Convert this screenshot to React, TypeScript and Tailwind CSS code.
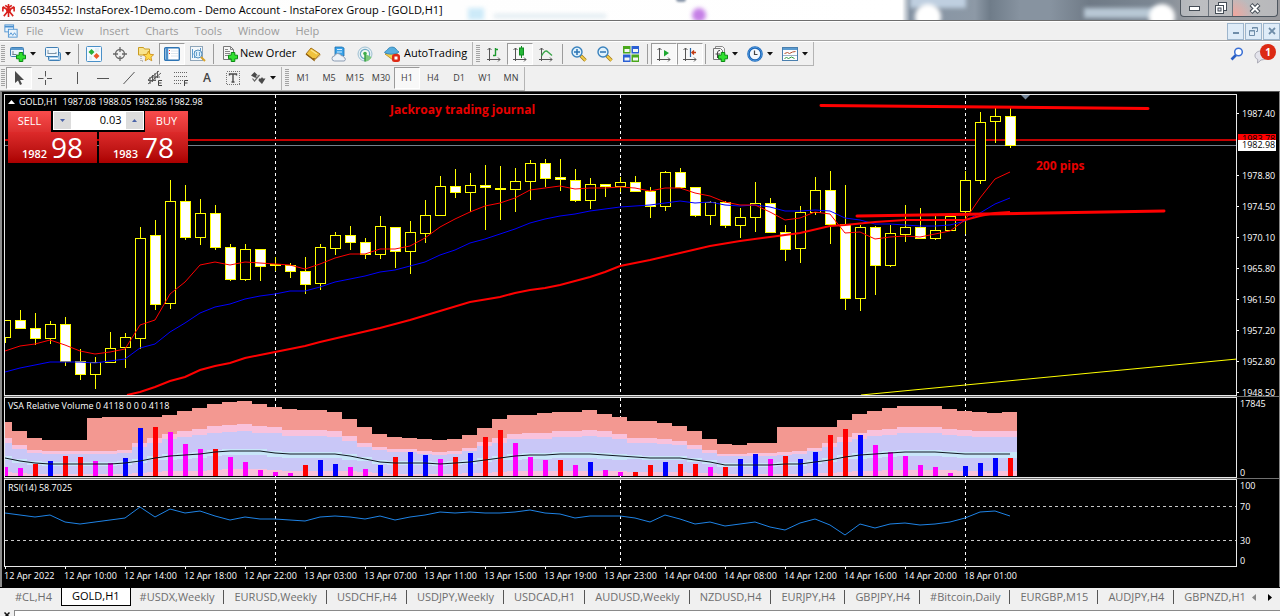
import { useState } from 'react';
import type { ReactNode } from 'react';
import clsx from 'clsx';

// [high, bodyTop, bodyBottom, low, bearish]
type Candle = [number, number, number, number, 0 | 1];

const STEP = 15;
const FIRST_X = 5;
const barX = (i: number) => FIRST_X + i * STEP;

const CANDLES: Candle[] = [
  [320, 320, 337, 342, 0], [310, 320, 328, 328, 1], [313, 328, 338, 344, 1], [321, 324, 338, 343, 0],
  [317, 324, 361, 365, 1], [349, 361, 374, 379, 1], [357, 362, 374, 388, 0], [332, 348, 362, 362, 0],
  [333, 337, 347, 367, 0], [227, 238, 338, 348, 0], [220, 235, 304, 309, 1], [180, 201, 303, 308, 0],
  [185, 201, 237, 239, 1], [199, 213, 237, 244, 0], [205, 213, 247, 249, 1], [244, 247, 279, 280, 1],
  [244, 249, 279, 280, 0], [249, 249, 266, 280, 1], [257, 264, 265, 270, 0], [263, 265, 271, 277, 1],
  [257, 271, 284, 293, 1], [244, 247, 283, 289, 0], [232, 235, 248, 254, 0], [226, 235, 242, 249, 1],
  [238, 242, 254, 258, 1], [216, 226, 254, 258, 0], [227, 227, 251, 267, 1], [221, 232, 251, 273, 0],
  [200, 215, 233, 242, 0], [176, 186, 215, 215, 0], [169, 186, 192, 197, 1], [173, 185, 192, 211, 0],
  [165, 185, 187, 229, 1], [166, 188, 189, 219, 1], [168, 181, 189, 211, 0], [160, 163, 181, 199, 0],
  [159, 163, 178, 186, 1], [159, 177, 179, 190, 1], [169, 180, 200, 201, 1], [178, 184, 200, 208, 0],
  [184, 184, 186, 196, 1], [177, 182, 186, 191, 0], [176, 182, 191, 191, 1], [187, 191, 206, 217, 1],
  [171, 172, 206, 210, 0], [168, 172, 187, 187, 1], [187, 187, 215, 216, 1], [201, 202, 215, 224, 0],
  [201, 202, 225, 227, 1], [208, 217, 225, 237, 0], [182, 203, 217, 231, 0], [198, 203, 232, 232, 1],
  [225, 232, 249, 260, 1], [206, 212, 248, 262, 0], [177, 190, 212, 214, 0], [171, 190, 224, 243, 1],
  [185, 224, 298, 309, 1], [225, 227, 298, 310, 0], [226, 227, 265, 294, 1], [225, 233, 265, 266, 0],
  [205, 227, 234, 241, 0], [208, 227, 238, 238, 1], [215, 230, 238, 239, 0], [215, 216, 230, 230, 0],
  [171, 180, 211, 233, 0], [112, 122, 180, 183, 0], [108, 116, 121, 142, 0], [108, 116, 145, 147, 1],
];

const FAST_MA = [
  351, 346, 344, 340, 345, 351, 354, 352, 349, 325, 320, 294, 282, 265, 262, 265, 262, 263, 264, 265, 269, 264, 258,
  254, 254, 249, 249, 246, 238, 227, 219, 212, 206, 203, 198, 190, 188, 186, 189, 188, 188, 187, 188, 191, 188, 188,
  193, 196, 202, 205, 205, 212, 220, 218, 212, 214, 233, 232, 239, 237, 236, 237, 234, 231, 220, 198, 179, 172,
];

const MID_MA = [
  372, 368, 365, 362, 362, 362, 363, 361, 359, 348, 344, 332, 323, 313, 307, 304, 299, 296, 294, 291, 291, 287, 282,
  279, 276, 272, 270, 266, 262, 255, 250, 243, 239, 234, 229, 223, 219, 216, 214, 211, 209, 207, 206, 205, 203, 201,
  203, 202, 205, 206, 205, 207, 211, 211, 210, 211, 218, 220, 224, 224, 225, 226, 226, 225, 221, 213, 204, 198,
];

const SLOW_MA: [number, number][] = [
  [127, 395], [140, 392], [155, 387], [170, 381], [185, 377], [200, 370], [215, 366], [230, 363], [245, 358],
  [260, 355], [275, 352], [290, 349], [305, 346], [320, 342], [350, 335], [380, 328], [410, 320], [440, 311],
  [470, 302], [500, 297], [515, 293], [530, 290], [545, 288], [560, 285], [590, 277], [605, 272], [620, 266],
  [650, 260], [680, 253], [710, 246], [740, 241], [770, 237], [800, 233], [830, 226], [845, 225], [875, 222],
  [905, 220], [965, 220], [980, 216], [995, 213], [1010, 212],
];

const VSA_TOP = [
  422, 431, 438, 440, 440, 440, 418, 417, 417, 417, 417, 415, 411, 408, 404, 402, 401, 404, 407, 409, 410, 410, 412,
  419, 427, 434, 437, 438, 439, 440, 439, 435, 428, 419, 415, 415, 413, 412, 412, 410, 414, 417, 421, 421, 423, 426,
  431, 439, 444, 445, 443, 443, 427, 427, 427, 427, 420, 414, 411, 408, 406, 406, 406, 409, 411, 412, 413, 412,
];

const VSA_PINK = [
  438, 445, 450, 451, 451, 451, 451, 451, 450, 443, 438, 434, 431, 429, 426, 425, 424, 426, 427, 430, 430, 430, 431,
  436, 443, 447, 449, 449, 451, 452, 451, 448, 442, 438, 434, 433, 433, 431, 431, 430, 431, 434, 438, 438, 439, 441,
  445, 450, 454, 454, 453, 453, 452, 451, 448, 443, 437, 433, 430, 429, 427, 427, 427, 429, 430, 431, 431, 431,
];

const VSA_AVG = [
  458, 461, 463, 464, 464, 464, 464, 464, 463, 461, 458, 456, 455, 454, 452, 451, 451, 451, 453, 454, 454, 454, 454,
  456, 459, 462, 463, 463, 463, 464, 463, 462, 460, 458, 456, 455, 455, 454, 454, 454, 455, 456, 457, 458, 458, 458,
  460, 462, 465, 465, 465, 465, 464, 464, 462, 460, 457, 455, 454, 453, 452, 452, 452, 453, 454, 454, 454, 454,
];

const VSA_BARS = [
  467, 468, 464, 461, 456, 457, 461, 463, 458, 428, 427, 432, 444, 449, 449, 457, 462, 470, 472, 473, 465, 460, 464,
  467, 469, 465, 457, 452, 455, 459, 457, 453, 437, 430, 443, 457, 460, 460, 465, 462, 470, 472, 472, 465, 462, 464,
  464, 467, 467, 459, 454, 459, 456, 459, 452, 435, 429, 435, 445, 452, 456, 465, 467, 473, 466, 463, 458, 458,
];
const VSA_KINDS = 'MMRBRRMMBBRMMMRMMMMMRBBMMBRBBMRBRRMMMRMBMMRRBRRMRBBMRBBRRBMMMMMMBBBR';
const BAR_COLORS: Record<string, string> = { M: '#ff00ff', R: '#ff0000', B: '#0000ff' };

const RSI = [
  513, 515, 517, 515, 522, 524, 522, 520, 518, 507, 517, 509, 513, 511, 516, 520, 517, 519, 519, 520, 521, 517, 516,
  517, 519, 516, 520, 517, 515, 512, 513, 512, 513, 513, 512, 510, 513, 514, 518, 516, 516, 516, 518, 522, 515, 519,
  524, 522, 526, 524, 522, 527, 530, 523, 519, 525, 535, 524, 528, 524, 523, 525, 524, 522, 518, 512, 511, 516,
];

const DATES = [
  '12 Apr 2022', '12 Apr 10:00', '12 Apr 14:00', '12 Apr 18:00', '12 Apr 22:00', '13 Apr 03:00', '13 Apr 07:00',
  '13 Apr 11:00', '13 Apr 15:00', '13 Apr 19:00', '13 Apr 23:00', '14 Apr 04:00', '14 Apr 08:00', '14 Apr 12:00',
  '14 Apr 16:00', '14 Apr 20:00', '18 Apr 01:00',
];
const PRICES = ['1978.80', '1974.50', '1970.10', '1965.80', '1961.50', '1957.20', '1952.80', '1948.50'];
const SYMBOLS = [
  '#CL,H4', 'GOLD,H1', '#USDX,Weekly', 'EURUSD,Weekly', 'USDCHF,H4', 'USDJPY,Weekly', 'USDCAD,H1', 'AUDUSD,Weekly',
  'NZDUSD,H4', 'EURJPY,H4', 'GBPJPY,H4', '#Bitcoin,Daily', 'EURGBP,M15', 'AUDJPY,H4', 'GBPNZD,H1',
];
const MENUS = ['File', 'View', 'Insert', 'Charts', 'Tools', 'Window', 'Help'];
const PERIODS = ['M1', 'M5', 'M15', 'M30', 'H1', 'H4', 'D1', 'W1', 'MN'];

const series = (ys: number[]) => ys.map((y, i) => `${barX(i)},${y}`).join(' ');

/* ---------- icons ---------- */

function Svg({ children, size = 16 }: { children: ReactNode; size?: number }) {
  return (
    <svg width={size} height={size} viewBox="0 0 16 16" fill="none" className="shrink-0">
      {children}
    </svg>
  );
}

const GreenPlus = ({ x = 6, y = 6 }: { x?: number; y?: number }) => (
  <path
    transform={`translate(${x} ${y})`}
    d="M3.200.5h3.600v2.700h2.700v3.600h-2.700v2.700h-3.600v-2.700h-2.700v-3.600h2.700z"
    fill="#2fe02f"
    stroke="#0a8a12"
  />
);

const NewChartIcon = () => (
  <Svg>
    <rect x=".5" y="1.5" width="13" height="9" rx="1" fill="#eaf4fc" stroke="#3f7fb5" />
    <path d="M1 3h12" stroke="#5b9bd0" strokeWidth="2" />
    <path d="M3 5v4M2.500 8.500h4" stroke="#6d7f90" />
    <GreenPlus />
  </Svg>
);

const ProfilesIcon = () => (
  <Svg>
    <rect x="3.500" y="6.500" width="12" height="8" rx="1" fill="#a9cdea" stroke="#3f7fb5" />
    <path d="M5 12.500h8" stroke="#fff" />
    <rect x=".5" y="1.500" width="13" height="9" rx="1" fill="#eef6fc" stroke="#3f7fb5" />
    <path d="M3 4v4M3 7.500h8M11 6v2M5.500 7v1" stroke="#7d93a6" />
  </Svg>
);

const MarketWatchIcon = () => (
  <Svg>
    <rect x=".5" y=".5" width="15" height="15" rx="1" fill="#f4faff" stroke="#4a90c8" />
    <path d="M9 3h4M9 5h4M3 11h3M3 13h3" stroke="#d5e3ee" />
    <path d="M5.500 3l3 3-3 3-3-3z" fill="#27b03a" />
    <path d="M10.500 7l3 3-3 3-3-3z" fill="#ec5a2b" />
  </Svg>
);

const TargetIcon = () => (
  <Svg>
    <circle cx="8" cy="8" r="4.500" stroke="#6a6a6a" strokeWidth="1.300" />
    <path d="M8 1v5M8 10v5M1 8h5M10 8h5" stroke="#6a6a6a" strokeWidth="1.300" />
  </Svg>
);

const FolderStarIcon = () => (
  <Svg>
    <path d="M.5 1.500h5l1 1.500h5v6H.5z" fill="#f9e48e" stroke="#c99c22" />
    <path d="M3 10v5h3" stroke="#888" strokeDasharray="1 1" />
    <path d="M10.500 5l1.600 3.300 3.600.4-2.700 2.400.8 3.700-3.300-1.900-3.300 1.900.8-3.700-2.700-2.400 3.600-.4z" fill="#ffd84a" stroke="#c98a14" strokeWidth=".8" />
  </Svg>
);

const NavigatorIcon = () => (
  <Svg>
    <rect x=".7" y="1.700" width="14.600" height="12.600" rx="1" fill="#fff" stroke="#2d74b4" strokeWidth="1.400" />
    <path d="M3 2v12" stroke="#4d8fcb" strokeWidth="2.500" />
    <path d="M5.500 4v1M5.500 7v1" stroke="#e33" />
    <path d="M7 5h7M7 7.500h7M7 10h7" stroke="#dbe6ee" />
  </Svg>
);

const TesterIcon = () => (
  <Svg>
    <rect x=".5" y=".5" width="12" height="14" fill="#f3f7fa" stroke="#8fa5b8" />
    <path d="M2.500 3v9M4.500 5v7M10.500 2v5" stroke="#5b9bd0" />
    <circle cx="8" cy="8" r="4" fill="#d5ecfa" fillOpacity=".85" stroke="#5691c0" />
    <path d="M6.500 6v4M9.500 6v4" stroke="#6fa5cf" />
    <path d="M11 11l4 4" stroke="#d8a32b" strokeWidth="2" />
  </Svg>
);

const NewOrderIcon = () => (
  <Svg>
    <path d="M1.500.5h7l3 3v10h-10z" fill="#f6f6f6" stroke="#777" />
    <path d="M8.500.5v3h3M3 3.500h3M3 5.500h5M3 7.500h5M3 9.500h3" stroke="#888" />
    <GreenPlus />
  </Svg>
);

const BookIcon = () => (
  <Svg>
    <path d="M6 2l9 6-6 6-8-6z" fill="#f0c23c" stroke="#a8741a" />
    <path d="M1 8l8 6v-2" stroke="#8f5f12" strokeWidth="1.500" />
    <path d="M9 14l6-6v1.500l-6 5z" fill="#fff6d0" stroke="#a8741a" strokeWidth=".6" />
    <path d="M6 4l6 4" stroke="#fbe48a" strokeWidth="1.500" />
  </Svg>
);

const CloudServerIcon = () => (
  <Svg>
    <path d="M4 1h7l2 1v8H4z" fill="#3aa2e8" stroke="#1b6fb0" strokeWidth=".8" />
    <path d="M6 3.500h5M6 6h5" stroke="#d9f0ff" strokeWidth="1.200" />
    <path d="M3.500 15a2.500 2.500 0 010-5 3.500 3.500 0 016.500-.5 3 3 0 013 2 1.800 1.800 0 010 3.500z" fill="#eef2f7" stroke="#8c9db3" />
  </Svg>
);

const SignalIcon = () => (
  <Svg>
    <circle cx="8" cy="8" r="7" fill="#e6f0f4" stroke="#9fc0d2" />
    <circle cx="8" cy="8" r="4.600" fill="#f3faf3" stroke="#6da9c4" strokeWidth="1.200" />
    <path d="M8 8v7.500c3 0 5.500-2 6.500-4.500C13 10 10 9 8 8z" fill="#7cc97c" />
    <path d="M8 8v7.500" stroke="#2f9a3d" strokeWidth="1.400" />
    <circle cx="8" cy="7.500" r="1.800" fill="#3fae4c" />
  </Svg>
);

const AutoTradingIcon = () => (
  <Svg>
    <path d="M1 8l6-2 7 2-5 6z" fill="#f5cf4a" stroke="#b98618" strokeWidth=".8" />
    <path d="M.5 6.500C2 4 3 5 4 3s6-3 8 0c1 2 2 1.500 3 3-3 2.500-11 3-14.500.5z" fill="#57aede" stroke="#2c7cae" strokeWidth=".8" />
    <rect x="8" y="8" width="8" height="8" rx="2.500" fill="#dd2a16" />
    <rect x="10.500" y="10.500" width="3" height="3" fill="#fff" />
  </Svg>
);

const Axes = () => (
  <path d="M3.500 2v13M1 13.500h13M1.500 4L3.500 2l2 2M12 11.500l2 2-2 2" stroke="#555" />
);

const BarChartIcon = () => (
  <Svg>
    <Axes />
    <path d="M9.500 2v8M9.500 3.500H12M7 9.500h2.500" stroke="#1c9a2e" strokeWidth="1.400" />
  </Svg>
);

const CandleIcon = () => (
  <Svg>
    <Axes />
    <path d="M9.500 0v12" stroke="#128a22" />
    <rect x="7.500" y="2" width="4" height="7" fill="#25b838" stroke="#128a22" />
  </Svg>
);

const LineChartIcon = () => (
  <Svg>
    <Axes />
    <path d="M3.500 10C6 5 8 4 10 6l4 3.500" stroke="#3aa54a" strokeWidth="1.300" />
  </Svg>
);

const ZoomIcon = ({ plus = false }: { plus?: boolean }) => (
  <Svg>
    <path d="M9.500 9.500l5 5" stroke="#a67a14" strokeWidth="3.400" />
    <path d="M10 10l4.500 4.500" stroke="#f1cd4b" strokeWidth="1.800" />
    <circle cx="6" cy="6" r="5" fill="#dff1fc" stroke="#3a82bd" strokeWidth="1.400" />
    <path d={plus ? 'M3 6h6M6 3v6' : 'M3 6h6'} stroke="#2d74b4" strokeWidth="1.500" />
  </Svg>
);

const TilesIcon = () => (
  <Svg>
    <rect x="0" y="0" width="7.500" height="7.500" fill="#4aa81c" />
    <rect x="8.500" y="0" width="7.500" height="7.500" fill="#2a5fd4" />
    <rect x="0" y="8.500" width="7.500" height="7.500" fill="#2a5fd4" />
    <rect x="8.500" y="8.500" width="7.500" height="7.500" fill="#4aa81c" />
    <path d="M1.500 4.500h5M10 4.500h5M1.500 13h5M10 13h5" stroke="#f4f8f4" strokeWidth="3" />
  </Svg>
);

const AutoScrollIcon = () => (
  <Svg>
    <Axes />
    <path d="M8 4l5 3-5 3.500z" fill="#1ea832" />
  </Svg>
);

const ShiftIcon = () => (
  <Svg>
    <Axes />
    <path d="M8.500 2v9" stroke="#2866a8" strokeWidth="1.200" />
    <path d="M14 6.500h-4M12 4.500l-2 2 2 2" stroke="#c03a12" strokeWidth="1.400" />
  </Svg>
);

const IndicatorsIcon = () => (
  <Svg>
    <path d="M3.500.5h7l2 2v9h-9z" fill="#f6f6f6" stroke="#888" />
    <path d="M1.500 2.500h7l2 2v9h-9z" fill="#f6f6f6" stroke="#777" />
    <path d="M8 4.500c-2 0-2.500 1-2.500 2.500v5M3.500 8H8" stroke="#444" />
    <GreenPlus />
  </Svg>
);

const ClockIcon = () => (
  <Svg>
    <circle cx="8" cy="8" r="6.500" fill="#f2f8fd" stroke="#1d66b8" strokeWidth="2.600" />
    <circle cx="8" cy="8" r="6.800" stroke="#5aa6e8" strokeWidth=".7" />
    <path d="M7.500 4.500V8.500h3" stroke="#444" strokeWidth="1.200" />
  </Svg>
);

const TemplateIcon = () => (
  <Svg>
    <rect x=".5" y="1.500" width="15" height="13" fill="#fbfdff" stroke="#4a7fae" />
    <path d="M1 3h14" stroke="#5b9bd0" strokeWidth="2" />
    <path d="M2.500 7.500l3-1 2 1 3-1.500 3-.5" stroke="#b5532f" />
    <path d="M1 9.500h14" stroke="#9db4c7" />
    <path d="M2.500 12.500l2-1 2 1 3-1.500 3 1.500" stroke="#2f9a3d" />
  </Svg>
);

const CursorIcon = () => (
  <Svg>
    <path d="M4 1v12l3-2.500L9 15l2-1-2-4h4z" fill="#4a4a4a" />
  </Svg>
);

const CrosshairIcon = () => (
  <Svg>
    <path d="M8.500 1v5.500M8.500 10v5M1 8.500h5.500M10 8.500h5" stroke="#555" />
  </Svg>
);

const LineTool = ({ d }: { d: string }) => (
  <Svg>
    <path d={d} stroke="#555" />
  </Svg>
);

const ChannelIcon = () => (
  <Svg>
    <path d="M1 10l11-9M1 14L14 3M3 14V7M5.500 12V5M8 10V3M10.500 8V1M1 10.500h8M4 7h9" stroke="#4f4f4f" strokeWidth=".9" />
    <path d="M15 10.500h-3.500v5H15M11.500 13h3" stroke="#444" />
  </Svg>
);

const FiboIcon = () => (
  <Svg>
    <path d="M1 2.500h14M1 6.500h14M1 10.500h9M1 13.500h8" stroke="#666" strokeDasharray="1 1" />
    <path d="M15 10.500h-3.500v5.500M11.500 13h3" stroke="#444" />
  </Svg>
);

const TextLabelIcon = () => (
  <Svg>
    <rect x="1.500" y="1.500" width="13" height="13" stroke="#777" strokeDasharray="1 1" shapeRendering="crispEdges" />
    <path d="M4.500 5.500v-1.500h7v1.500M8 4v8M6.500 12h3" stroke="#4a4a4a" strokeWidth="1.400" />
  </Svg>
);

const ArrowsIcon = () => (
  <Svg>
    <path d="M4.500 2L8 5.500H6L7 8 4.500 7.500 1 5.500z" fill="#4a4a4a" />
    <path d="M2.500 8.500l2 2.500 5-6" stroke="#666" strokeWidth="1.200" />
    <path d="M9 8.500h2l1-1.500 1 1.500h2.500L12 14l-3.500-3.500z" fill="#4a4a4a" />
  </Svg>
);

const Caret = () => (
  <svg width="6" height="4" viewBox="0 0 6 4" className="shrink-0">
    <path d="M0 0h6L3 3.500z" fill="#111" />
  </svg>
);

/* ---------- toolbar parts ---------- */

interface ToolProps {
  label: string;
  pressed?: boolean;
  children: ReactNode;
}

function Tool({ label, pressed, children }: ToolProps) {
  return (
    <button
      aria-label={label}
      className={clsx(
        'flex h-[22px] w-[26px] shrink-0 items-center justify-center text-[9px] text-[#444]',
        pressed && 'border border-t-[#9a9a9a] border-r-white border-b-white border-l-[#9a9a9a] bg-[#f8f8f8]',
      )}
    >
      {children}
    </button>
  );
}

function DropTool({ label, children }: ToolProps) {
  return (
    <button aria-label={label} className="flex h-[22px] w-[35px] shrink-0 items-center gap-1 pl-1">
      {children}
      <Caret />
    </button>
  );
}

const Divider = ({ wide = false }: { wide?: boolean }) => (
  <div className={clsx('h-5 w-px shrink-0 bg-[#9c9c9c]', wide ? 'mx-[3px]' : 'mx-0.5')} />
);

const Grip = () => (
  <div className="mx-px h-[18px] w-1 shrink-0 bg-[repeating-linear-gradient(to_bottom,#a3a3a3_0_1px,#efefef_1px_2px)]" />
);

const band = 'flex h-6 shrink-0 items-center border-b border-r border-[#b4b4b4]';

function TitleBar() {
  return (
    <header className="relative flex h-[21px] shrink-0 items-center overflow-hidden border-b border-[#6d6d6d] bg-[linear-gradient(to_right,#fdfdfd_0,#fff_902px,#8593a3_910px,#8d99a6_975px,#6f7c89_990px,#8793a0_1020px,#8793a0_1050px,#6f7a86_1090px,#7b8692_1150px,#a0a2a6_1200px,#9a9a9e_1280px)]">
      <div className="absolute top-2 left-[692px] size-[14px] rounded-full bg-[#c57fe6] blur-[2px]" />
      <div className="absolute -top-1 left-[676px] h-1.5 w-2.5 rounded-full bg-[#8795a8] blur-[1px]" />
      <div className="absolute top-2 left-[468px] h-3 w-4 bg-[#cdeaf8] blur-[2px]" />
      <div className="absolute top-3.5 left-[494px] h-1 w-28 bg-[#dfeaf0] blur-[2px]" />
      <div className="absolute -top-2 left-[910px] h-4 w-14 bg-[#bfcfe0] blur-[2px]" />
      <div className="absolute top-1 left-[915px] size-[26px] rounded-full bg-white blur-[2px]" />
      <div className="absolute top-2 left-[1084px] h-2.5 w-20 bg-[#b8c8d5] blur-[2px]" />
      <div className="absolute top-1 left-[1149px] size-[26px] rounded-full bg-white blur-[2px]" />
      <div className="relative flex flex-1 items-center gap-1 pl-px">
        <Svg size={15}>
          <path d="M8 1v6M8 8L2 4M8 8l6-4M8 8L3 14M8 8l5 6M8 8v7M2 4v5M14 4v5M4.500 2.500L8 5l3.500-2.500" stroke="#d8201c" strokeWidth="1.700" />
          <circle cx="8" cy="8" r="2.600" fill="#d8201c" />
        </Svg>
        <h1 className="text-[11px] text-black">
          65034552: InstaForex-1Demo.com - Demo Account - InstaForex Group - [GOLD,H1]
        </h1>
      </div>
      <div className="relative mr-0.5 flex h-[17px] self-start rounded-b border border-t-0 border-[#4e565f] bg-white/30">
        <button aria-label="Minimize" className="flex w-7 items-center justify-center border-r border-[#6c747d]">
          <svg width="11" height="5" viewBox="0 0 11 5"><rect x=".5" y=".5" width="10" height="4" fill="#fff" stroke="#444c55" /></svg>
        </button>
        <button aria-label="Restore" className="flex w-6 items-center justify-center border-r border-[#6c747d]">
          <svg width="12" height="12" viewBox="0 0 12 12">
            <rect x="3.500" y=".5" width="8" height="8" fill="#fff" stroke="#444c55" />
            <rect x=".5" y="3.500" width="8" height="8" fill="#fff" stroke="#444c55" />
            <rect x="3" y="6" width="3" height="3" fill="#dde" stroke="#444c55" />
          </svg>
        </button>
        <button aria-label="Close" className="flex w-11 items-center justify-center bg-[radial-gradient(circle_at_0_100%,#f4a59c,transparent_20px)]">
          <svg width="12" height="11" viewBox="0 0 12 11">
            <path d="M2 1.500l8 8M10 1.500l-8 8" stroke="#444c55" strokeWidth="4" />
            <path d="M2.500 2l7 7M9.500 2l-7 7" stroke="#fff" strokeWidth="2" />
          </svg>
        </button>
      </div>
    </header>
  );
}

function MenuBar() {
  const mdi = 'flex h-[17px] w-[17px] items-center justify-center border border-[#9db5cc] bg-[#dfecf8]';
  return (
    <nav className="flex h-5 shrink-0 items-center border-t border-b border-t-white border-b-[#a5a5a5] bg-[#f0f0f0] pl-1">
      <svg width="14" height="14" viewBox="0 0 16 16" fill="none">
        <rect x="1" y="1" width="10" height="8" fill="#eaf4fc" stroke="#4a90d0" />
        <path d="M1 3h10" stroke="#4a90d0" strokeWidth="2" />
        <rect x="5" y="6" width="10" height="9" fill="#eaf4fc" stroke="#4a90d0" />
        <path d="M6 13l2-3 2 3 2-3 2 3" stroke="#4a90d0" />
      </svg>
      <div className="flex flex-1">
        {MENUS.map((m) => (
          <button key={m} className="px-2 text-[11px] text-[#9b9b9b]">{m}</button>
        ))}
      </div>
      <div className="flex gap-px">
        <button aria-label="Minimize chart" className={mdi}>
          <svg width="8" height="8" viewBox="0 0 8 8"><path d="M1 6h6" stroke="#6f8da9" strokeWidth="2" /></svg>
        </button>
        <button aria-label="Restore chart" className={mdi}>
          <svg width="9" height="9" viewBox="0 0 9 9" fill="none" stroke="#6f8da9"><path d="M3.500 2V.5h5v4H7M3 1h5M.5 3.500h5v5h-5zM1 4h5" /></svg>
        </button>
        <button aria-label="Close chart" className={mdi}>
          <svg width="8" height="8" viewBox="0 0 8 8"><path d="M1 1l6 6M7 1L1 7" stroke="#6f8da9" strokeWidth="1.800" /></svg>
        </button>
      </div>
    </nav>
  );
}

function Toolbars({ period, onPeriod }: { period: string; onPeriod: (p: string) => void }) {
  return (
    <div className="shrink-0 bg-[#f0f0f0]">
      <div className="flex h-[25px] items-center border-t border-white">
        <div className={band}>
          <Grip />
          <DropTool label="New chart"><NewChartIcon /></DropTool>
          <DropTool label="Profiles"><ProfilesIcon /></DropTool>
          <Divider />
          <Tool label="Market Watch"><MarketWatchIcon /></Tool>
          <Tool label="Data Window"><TargetIcon /></Tool>
          <Tool label="Navigator"><FolderStarIcon /></Tool>
          <Tool label="Terminal" pressed><NavigatorIcon /></Tool>
          <Tool label="Strategy Tester"><TesterIcon /></Tool>
          <Divider />
          <button className="flex h-[22px] w-[84px] items-center gap-0.5 pl-1.5 text-[11px] text-black">
            <NewOrderIcon />
            <span className="whitespace-nowrap">New Order</span>
          </button>
          <Tool label="MetaEditor"><BookIcon /></Tool>
          <Tool label="Virtual Hosting"><CloudServerIcon /></Tool>
          <Tool label="Signals"><SignalIcon /></Tool>
          <button className="flex h-[22px] w-[94px] items-center gap-1 pl-1.5 text-[11px] text-black">
            <AutoTradingIcon />
            AutoTrading
          </button>
        </div>
        <div className={clsx(band, 'pl-0.5')}>
          <Grip />
          <Tool label="Bar chart"><BarChartIcon /></Tool>
          <Tool label="Candlesticks" pressed><CandleIcon /></Tool>
          <Tool label="Line chart"><LineChartIcon /></Tool>
          <Divider wide />
          <Tool label="Zoom in"><ZoomIcon plus /></Tool>
          <Tool label="Zoom out"><ZoomIcon /></Tool>
          <Tool label="Tile windows"><TilesIcon /></Tool>
          <Divider wide />
          <Tool label="Auto scroll" pressed><AutoScrollIcon /></Tool>
          <Tool label="Chart shift" pressed><ShiftIcon /></Tool>
          <Divider />
          <DropTool label="Indicators"><IndicatorsIcon /></DropTool>
          <DropTool label="Periods"><ClockIcon /></DropTool>
          <DropTool label="Templates"><TemplateIcon /></DropTool>
        </div>
        <div className="flex flex-1 items-center justify-end gap-2.5 pr-1">
          <button aria-label="Search">
            <svg width="14" height="14" viewBox="0 0 14 14" fill="none">
              <path d="M6 8l-4.500 4.500" stroke="#2a5fc4" strokeWidth="2.600" />
              <circle cx="8.500" cy="5" r="3.800" fill="#fff" stroke="#3a6fd4" strokeWidth="1.500" />
            </svg>
          </button>
          <button aria-label="Notifications" className="relative h-5 w-[22px]">
            <svg width="14" height="14" viewBox="0 0 14 14" className="mt-1.5">
              <path d="M7 1c3.500 0 6 2 6 4.500S10.500 10 7 10L3.500 13l.3-3.500C1.500 8.500 1 7 1 5.500 1 3 3.500 1 7 1z" fill="#e4e4ec" stroke="#a9a9b4" />
            </svg>
            <span className="absolute top-0 right-0 flex size-4 items-center justify-center rounded-full bg-[#dc2a14] text-[10px] font-bold text-white">1</span>
          </button>
        </div>
      </div>
      <div className="flex h-[25px] items-center">
        <div className={band}>
          <Grip />
          <Tool label="Cursor" pressed><CursorIcon /></Tool>
          <Tool label="Crosshair"><CrosshairIcon /></Tool>
          <div className="w-1.5" />
          <Tool label="Vertical line"><LineTool d="M8.500 2v12" /></Tool>
          <Tool label="Horizontal line"><LineTool d="M2 8.500h12" /></Tool>
          <Tool label="Trendline"><LineTool d="M2.500 14l11-12" /></Tool>
          <Tool label="Equidistant channel"><ChannelIcon /></Tool>
          <Tool label="Fibonacci retracement"><FiboIcon /></Tool>
          <Tool label="Text"><span className="text-xs font-semibold">A</span></Tool>
          <Tool label="Text label"><TextLabelIcon /></Tool>
          <DropTool label="Arrows"><ArrowsIcon /></DropTool>
        </div>
        <div className={clsx(band, 'pl-0.5')}>
          <Grip />
          {PERIODS.map((p) => (
            <button
              key={p}
              onClick={() => onPeriod(p)}
              className={clsx(
                'h-[22px] w-[26px] text-[9px] font-medium text-[#3c3c3c]',
                p === period && 'border border-t-[#9a9a9a] border-r-white border-b-white border-l-[#9a9a9a] bg-[#f8f8f8]',
              )}
            >
              {p}
            </button>
          ))}
        </div>
      </div>
    </div>
  );
}

/* ---------- chart ---------- */

const SessionLines = ({ top, bottom }: { top: number; bottom: number }) => (
  <g stroke="#fff" strokeDasharray="3 3" shapeRendering="crispEdges">
    {[275, 620, 965].map((x) => (
      <line key={x} x1={x + 0.5} x2={x + 0.5} y1={top} y2={bottom} />
    ))}
  </g>
);

function TradePanel() {
  const [volume, setVolume] = useState('0.03');
  const spin = 'flex w-[17px] items-center justify-center bg-[#dcdcdc]';
  const side = 'flex h-[21px] w-[43px] items-center justify-center bg-linear-to-b from-[#f94c4c] to-[#dd2f2f] text-[11px] text-white';
  const price = 'flex h-[31px] flex-1 items-baseline justify-center gap-1 bg-linear-to-b from-[#dd2a2a] to-[#ab0000] leading-[31px] text-white';
  const step = (d: number) => setVolume((v) => Math.max(0.01, Number(v) + d).toFixed(2));
  return (
    <div className="absolute top-4 left-[3px] w-[180px]">
      <div className="flex items-start justify-between">
        <button className={side}>SELL</button>
        <div className="flex h-[19px] w-[91px] bg-white p-px">
          <button aria-label="Decrease volume" className={spin} onClick={() => step(-0.01)}>
            <svg width="5" height="3" viewBox="0 0 5 3"><path d="M0 0h5L2.500 3z" fill="#4a63a8" /></svg>
          </button>
          <input
            aria-label="Volume"
            value={volume}
            onChange={(e) => setVolume(e.target.value)}
            className="w-0 flex-1 bg-white pr-1 text-right text-[11px] text-black outline-none"
          />
          <button aria-label="Increase volume" className={spin} onClick={() => step(0.01)}>
            <svg width="5" height="3" viewBox="0 0 5 3"><path d="M0 3h5L2.500 0z" fill="#4a63a8" /></svg>
          </button>
        </div>
        <button className={side}>BUY</button>
      </div>
      <div className="flex gap-0.5">
        <button className={price}>
          <span className="text-[11px] font-semibold">1982</span>
          <span className="text-[28px]">98</span>
        </button>
        <button className={price}>
          <span className="text-[11px] font-semibold">1983</span>
          <span className="text-[28px]">78</span>
        </button>
      </div>
    </div>
  );
}

function PricePane() {
  return (
    <div className="flex h-[302px]">
      <div className="relative flex-1 border border-[#e8e8e8]">
        <svg width="100%" height="300" className="block">
          <g transform="translate(-5 -95)" fill="none">
            <SessionLines top={95} bottom={395} />
            <rect x="5" y="139" width="100%" height="2" fill="#c40000" />
            <rect x="5" y="145" width="100%" height="1" fill="#74808a" />
            <g stroke="#ffff00" shapeRendering="crispEdges">
              {CANDLES.map(([high, top, bottom, low, bear], i) => (
                <g key={i}>
                  <path d={`M${barX(i) + 0.5} ${high}V${top}M${barX(i) + 0.5} ${bottom}V${low + 1}`} />
                  <rect
                    x={barX(i) - 4.5}
                    y={top + 0.5}
                    width="10"
                    height={Math.max(1, bottom - top)}
                    fill={bear ? '#fff' : '#000'}
                  />
                </g>
              ))}
            </g>
            <polyline points={series(MID_MA)} stroke="#0000ff" />
            <polyline points={series(FAST_MA)} stroke="#ff0000" />
            <polyline points={SLOW_MA.map((p) => p.join(',')).join(' ')} stroke="#ff0000" strokeWidth="2" />
            <path d="M861 395L1237 359" stroke="#ffff00" />
            <path d="M821 105.500L1148 108.500M857 216L1164 211" stroke="#ff0000" strokeWidth="3" strokeLinecap="round" />
            <path d="M1021 95h9l-4.500 4.500z" fill="#74869a" />
          </g>
          <text x="385" y="19" className="fill-[#e80000] text-[12px] font-bold">Jackroay trading journal</text>
          <text x="1031" y="75" className="fill-[#e80000] text-[12px] font-bold">200 pips</text>
        </svg>
        <p className="absolute top-0 left-[3px] flex items-center gap-1 text-[9px] leading-[14px] whitespace-pre text-white">
          <svg width="7" height="4" viewBox="0 0 7 4"><path d="M0 4h7L3.500 0z" fill="#fff" /></svg>
          {'GOLD,H1  1987.08 1988.05 1982.86 1982.98'}
        </p>
        <TradePanel />
      </div>
      <div className="w-[42px] pt-1 text-[9px] leading-[10px] text-white">
        <PriceMark value="1987.40" />
        <div className="flex h-[31px] w-[39px] flex-col pt-[5px] pl-px">
          <div className="h-1.5 overflow-hidden bg-[#ff0000] pl-1 text-black">1983.78</div>
          <div className="h-[11px] bg-white pl-1 text-black">1982.98</div>
        </div>
        {PRICES.map((p) => (
          <PriceMark key={p} value={p} />
        ))}
      </div>
    </div>
  );
}

const PriceMark = ({ value }: { value: string }) => (
  <div className="flex h-[31px] items-center gap-[3px]">
    <i className="h-px w-0.5 bg-white" />
    {value}
  </div>
);

function VolumePane() {
  const steps = (tops: number[], fill: string) =>
    tops.map((y, i) => <rect key={`${fill}${i}`} x={barX(i) - 8} y={y} width="15" height={476 - y} fill={fill} />);
  return (
    <div className="flex h-[81px]">
      <div className="relative flex-1 border border-[#e8e8e8]">
        <svg width="100%" height="79" className="block" shapeRendering="crispEdges">
          <g transform="translate(-5 -398)" fill="none">
            <SessionLines top={398} bottom={477} />
            {steps(VSA_TOP, '#f39891')}
            {steps(VSA_PINK, '#f9c2dc')}
            {steps(VSA_PINK.map((y) => Math.round(y + 1.5 + (460 - y) * 0.15)), '#c9c7f7')}
            {VSA_AVG.map((y, i) => (
              <rect key={i} x={barX(i) - 8} y={y - 2} width="15" height={y < 457 ? 6 : 4} fill="#c8e6f9" />
            ))}
            {steps(VSA_AVG.map((y) => Math.round(474 - (464 - y) * 0.35)), '#f9c2dc')}
            {VSA_BARS.map((y, i) => (
              <rect key={i} x={barX(i) - 2} y={y} width="5" height={476 - y} fill={BAR_COLORS[VSA_KINDS[i]]} />
            ))}
            <polyline points={series(VSA_AVG)} stroke="#101820" shapeRendering="auto" />
          </g>
        </svg>
        <p className="absolute top-0.5 left-[3px] text-[9px] leading-3 text-white">VSA Relative Volume 0 4118 0 0 0 4118</p>
      </div>
      <div className="flex w-[42px] flex-col justify-between pt-0.5 pl-[3px] text-[9px] leading-[10px] text-white">
        <span>17845</span>
        <span>0</span>
      </div>
    </div>
  );
}

function RsiPane() {
  return (
    <div className="flex h-[88px]">
      <div className="relative flex-1 border border-[#e8e8e8]">
        <svg width="100%" height="86" className="block">
          <g transform="translate(-5 -480)" fill="none">
            <SessionLines top={480} bottom={565} />
            <g stroke="#c8c8c8" strokeDasharray="3 3" shapeRendering="crispEdges">
              <line x1="5" x2="101%" y1="506.500" y2="506.500" />
              <line x1="5" x2="101%" y1="540.500" y2="540.500" />
            </g>
            <polyline points={series(RSI)} stroke="#1e83e6" />
          </g>
        </svg>
        <p className="absolute top-0.5 left-[3px] text-[9px] leading-3 text-white">RSI(14) 58.7025</p>
      </div>
      <div className="w-[42px] pl-[3px] text-[9px] text-white">
        <div className="h-3.5 leading-[14px]">100</div>
        <div className="h-7 leading-7">70</div>
        <div className="h-[39px] leading-[39px]">30</div>
        <div className="-mt-1.5 h-3.5 leading-[14px]">0</div>
      </div>
    </div>
  );
}

function DateAxis() {
  return (
    <div className="flex h-5 overflow-hidden">
      {DATES.map((d) => (
        <div key={d} className="w-[60px] shrink-0 text-[9px] leading-[13px] whitespace-nowrap text-white">
          <i className="ml-px block h-0.5 w-px bg-white" />
          {d}
        </div>
      ))}
    </div>
  );
}

function ChartTabs() {
  const [active, setActive] = useState('GOLD,H1');
  return (
    <div className="flex h-[21px] shrink-0 items-start border-t border-black bg-[#f0f0f0] pl-1.5">
      <div className="flex min-w-0 flex-1 overflow-hidden">
        {SYMBOLS.map((s, i) => (
          <button
            key={s}
            onClick={() => setActive(s)}
            className={clsx(
              'flex h-[18px] shrink-0 items-center text-[11px] whitespace-nowrap',
              s === active ? 'border border-t-0 border-black bg-white px-2.5 text-black' : 'text-[#6e6e6e]',
            )}
          >
            {s === active ? s : <span className="px-[9px]">{s}</span>}
            {s !== active && SYMBOLS[i + 1] !== active && i < SYMBOLS.length - 1 && (
              <i className="h-3.5 w-0.5 border-l border-[#555]" />
            )}
          </button>
        ))}
      </div>
      <div className="flex h-[18px] w-8 shrink-0 items-center justify-between pr-2 pl-1">
        <button aria-label="Scroll tabs left">
          <svg width="4" height="7" viewBox="0 0 4 7"><path d="M4 0v7L0 3.500z" fill="#888" /></svg>
        </button>
        <button aria-label="Scroll tabs right">
          <svg width="4" height="7" viewBox="0 0 4 7"><path d="M0 0v7l4-3.500z" fill="#000" /></svg>
        </button>
      </div>
    </div>
  );
}

export default function App() {
  const [period, setPeriod] = useState('H1');
  return (
    <div className="flex h-screen flex-col overflow-hidden bg-[#f0f0f0] font-['Open_Sans','Noto_Sans',sans-serif]">
      <TitleBar />
      <MenuBar />
      <Toolbars period={period} onPeriod={setPeriod} />
      <main className="shrink-0 border-t border-r border-l-2 border-t-[#555] border-r-[#888] border-l-[#8c8c8c] bg-black pt-0.5 pl-0.5">
        <PricePane />
        <div className="h-px bg-[#707070]" />
        <VolumePane />
        <div className="h-px bg-[#707070]" />
        <RsiPane />
        <DateAxis />
      </main>
      <ChartTabs />
      <footer className="flex min-h-0 flex-1 items-start overflow-hidden">
        <button aria-label="Close terminal" className="flex w-[14px] justify-center pt-1">
          <svg width="6" height="6" viewBox="0 0 6 6"><path d="M.5.5l5 5M5.500.5l-5 5" stroke="#111" strokeWidth="1.500" /></svg>
        </button>
        <div className="mt-0.5 h-full flex-1 border-t border-l border-[#8a8a8a] bg-white" />
      </footer>
    </div>
  );
}
